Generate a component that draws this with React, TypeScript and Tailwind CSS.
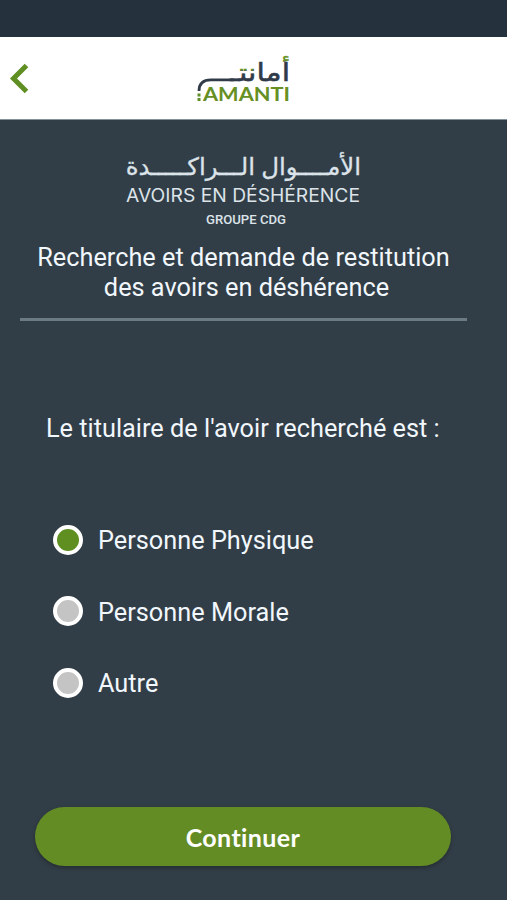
import { useState } from "react";

const options = ["Personne Physique", "Personne Morale", "Autre"];

const AmantiLogo = () => (
  <svg width="130" height="70" viewBox="0 0 130 70" aria-label="Amanti">
    <defs>
      {/* dark letters with green dots and hamza */}
      <pattern
        id="amanti-ink"
        patternUnits="userSpaceOnUse"
        x="-80"
        y="-40"
        width="100"
        height="60"
      >
        <rect width="100" height="60" fill="#303a49" />
        <rect width="100" height="20.4" fill="#668f24" />
        <rect width="49.5" height="29.5" fill="#668f24" />
      </pattern>
    </defs>
    <text
      transform="translate(110 36) scale(1.2 1)"
      direction="rtl"
      fontFamily="'DejaVu Sans', sans-serif"
      fontSize="25"
      fill="url(#amanti-ink)"
      stroke="url(#amanti-ink)"
      strokeWidth="0.5"
    >
      أمانتـ
    </text>
    <path
      d="M54 34.8H31C23 34.8 19 38 19 46"
      fill="none"
      stroke="#303a49"
      strokeWidth="2.8"
    />
    <path d="M17.5 48.5h3v3h-3zM17.5 53h3v3h-3z" fill="#5f8f28" />
    <text
      x="23"
      y="56"
      textLength="87"
      lengthAdjust="spacingAndGlyphs"
      fontFamily="Lato, sans-serif"
      fontWeight="700"
      fontSize="19.5"
      fill="#668f24"
    >
      AMANTI
    </text>
  </svg>
);

const AvoirsLogo = () => (
  <svg width="270" height="95" viewBox="0 0 270 95" fill="#dce4ea">
    <g
      direction="rtl"
      fontFamily="'DejaVu Sans', sans-serif"
      fontSize="24"
      stroke="#dce4ea"
      strokeWidth="0.3"
    >
      <text transform="translate(251 35) scale(1.02 1)">الأمــــوال</text>
      <text transform="translate(145 35) scale(1.02 1)">الـــراكـــــدة</text>
    </g>
    <text
      x="16"
      y="61.5"
      textLength="234"
      fontFamily="Inter, sans-serif"
      fontWeight="400"
      fontSize="18.5"
      lengthAdjust="spacingAndGlyphs"
    >
      AVOIRS EN DÉSHÉRENCE
    </text>
    <text
      x="96"
      y="83.5"
      textLength="80"
      fontFamily="Roboto, sans-serif"
      fontWeight="500"
      fontSize="13"
      lengthAdjust="spacingAndGlyphs"
    >
      GROUPE CDG
    </text>
  </svg>
);

const App = () => {
  const [selected, setSelected] = useState(0);

  return (
    <main className="flex h-[900px] w-[507px] flex-col overflow-hidden bg-[#323e47] font-['Roboto',sans-serif] text-[#f1f7fc]">
      <div className="h-[37px] shrink-0 bg-[#25323d]" />
      <header className="flex h-[83px] shrink-0 border-b border-[#86929a] bg-white">
        <button aria-label="Retour" className="h-full w-[180px]">
          <svg width="40" height="82" viewBox="0 0 40 82">
            <path
              d="M26.5 28.5L13.5 41.5L26.5 54.5"
              fill="none"
              stroke="#5f8f23"
              strokeWidth="5"
            />
          </svg>
        </button>
        <div className="pt-2">
          <AmantiLogo />
        </div>
      </header>

      <div className="h-[115px] shrink-0 pl-[110px] pt-5">
        <AvoirsLogo />
      </div>
      <h1 className="ml-5 h-[86px] w-[447px] shrink-0 border-b-[3px] border-[#6b7b83] pt-2 text-center text-[25.3px] leading-[30px]">
        <span className="block">Recherche et demande de restitution</span>
        <span className="block pl-[6px]">des avoirs en déshérence</span>
      </h1>
      <p className="ml-[46px] mt-[93px] shrink-0 text-[25.3px] leading-[30px]">
        Le titulaire de l'avoir recherché est :
      </p>

      <div className="ml-[53px] mt-[80.5px] flex shrink-0 flex-col gap-[41.5px]">
        {options.map((option, index) => (
          <button
            key={option}
            onClick={() => setSelected(index)}
            className="flex h-[30px] items-center gap-[15px] text-left text-[25.3px] leading-[30px]"
          >
            <span
              className={`size-[30px] rounded-full border-[4.5px] border-white ${
                index === selected ? "bg-[#5f8f20]" : "bg-[#c4c4c4]"
              }`}
            />
            <span className="pt-[3px]">{option}</span>
          </button>
        ))}
      </div>

      <button className="ml-[35px] mt-[109.5px] h-[59px] w-[416px] shrink-0 rounded-full bg-[#648c25] pt-[3px] text-center font-['Lato',sans-serif] text-[25px] font-bold tracking-[0.4px] text-white shadow-[0_2px_4px_rgba(0,0,0,0.3)] [font-variant-ligatures:none]">
        Continuer
      </button>
    </main>
  );
};

export default App;
